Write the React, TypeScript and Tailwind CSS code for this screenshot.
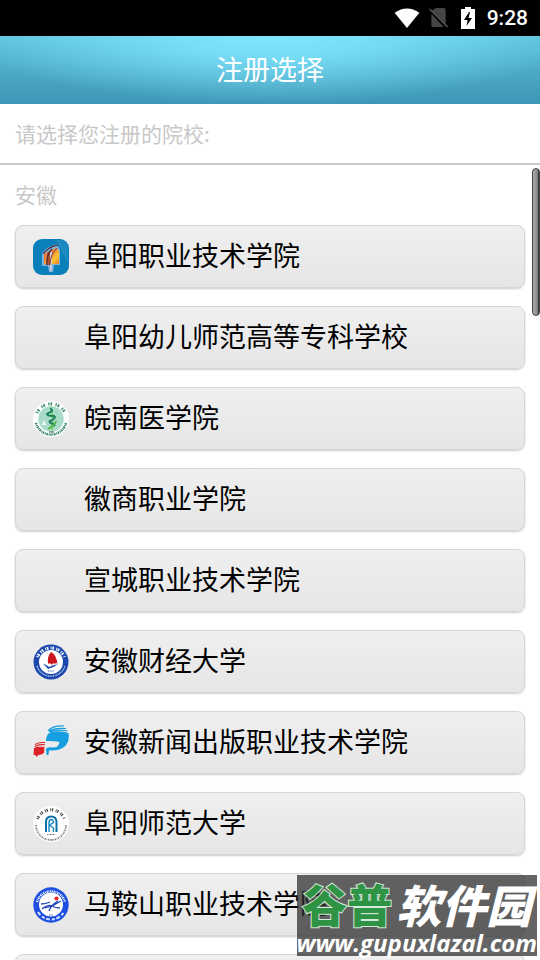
import React from 'react';

const FuyangVocationalLogo = () => (
  <svg viewBox="0 0 36 36" className="size-9" aria-hidden="true">
    <defs>
      <linearGradient id="door" x1="0" y1="0" x2="1" y2="1">
        <stop offset="0" stopColor="#e8643a" />
        <stop offset="0.45" stopColor="#f08a35" />
        <stop offset="0.7" stopColor="#fbc531" />
        <stop offset="1" stopColor="#e87a2c" />
      </linearGradient>
    </defs>
    <rect width="36" height="36" rx="9" fill="#0a80bb" />
    <path d="M24 1 L35 22 V9 Q35 2 28 1Z" fill="#1c89c0" />
    <path d="M24 1 L35 23" stroke="#3f9dca" strokeWidth="0.6" />
    <path d="M9 14 L14 9 L24 5 L27 11 V26 H21 L20 33 H16 L15 27 H9Z" fill="#a9bfe0" opacity="0.75" />
    <path d="M11 15 L23 9 L26 12 V25 H11Z" fill="url(#door)" />
    <path d="M14 14 L17 12 V26 H14Z" fill="#b5502f" />
    <path d="M17 14 L19 12 L18.500 32 H17Z" fill="#cfd3e3" />
    <path d="M10 15 Q15 8 25 6" fill="none" stroke="#4a2430" strokeWidth="1.200" />
    <path d="M14 26 Q13 16 19 10" fill="none" stroke="#4a2430" strokeWidth="1.200" />
    <path d="M17 26 Q17 15 24 9" fill="none" stroke="#7a3a3a" strokeWidth="1" />
  </svg>
);

const WannanMedicalLogo = () => (
  <svg viewBox="0 0 36 36" className="size-9" aria-hidden="true">
    <circle cx="18" cy="18" r="18" fill="#fdfefd" />
    <circle cx="18" cy="18" r="12.700" fill="#a9dbc9" />
    <path d="M4 12 A15.300 15.300 0 0 1 32 12" fill="none" stroke="#3c8d70" strokeWidth="3" strokeDasharray="1.200 1 1.800 3.400" />
    <path d="M3 22 A15.500 15.500 0 0 0 33 22" fill="none" stroke="#2f8063" strokeWidth="2.400" strokeDasharray="1.500 0.800 0.900 0.700" />
    <path d="M18 6 L19 11 L20 23 L19 29" fill="none" stroke="#6cbf4b" strokeWidth="1.200" />
    <path d="M17 8 Q19 8 19 10 L14 13 Q14 15 21 15 Q24 17 17 20 Q15 21 20 23 L22 25" fill="none" stroke="#17805a" strokeWidth="2" />
    <path d="M23 20 Q23 23 18 26 L15 28" fill="none" stroke="#55b548" strokeWidth="1.800" />
    <path d="M11 19 L13 24 H9Z" fill="#f4fbf8" />
    <path d="M16 31 H21" stroke="#37564c" strokeWidth="1" />
  </svg>
);

const AnhuiFinanceLogo = () => (
  <svg viewBox="0 0 36 36" className="size-9" aria-hidden="true">
    <circle cx="18" cy="18" r="17.500" fill="#1c48ae" />
    <circle cx="18" cy="18" r="12" fill="#fff" />
    <path d="M4.500 13 A14.600 14.600 0 0 1 31.500 13" fill="none" stroke="#fff" strokeWidth="3" strokeDasharray="1 0.800 1.600 2.200" />
    <path d="M4 22 A14.700 14.700 0 0 0 32 22" fill="none" stroke="#dce6fa" strokeWidth="1.200" strokeDasharray="1 0.700" />
    <path d="M15 20 Q14 12 18 8 Q23 10 24.500 20 Q23 18 22 20 Q20 18 19 21 Q17 18 15 20Z" fill="#d0161d" />
    <path d="M10 20 Q13 20 16 23 Q20 21 25 20 Q20 24 15 25 Q13 22 10 20Z" fill="#1c48ae" />
    <path d="M15 27 H21" stroke="#4468b8" strokeWidth="1" strokeDasharray="1 0.600" />
  </svg>
);

const AnhuiPressLogo = () => (
  <svg viewBox="0 0 36 36" className="size-9" aria-hidden="true">
    <path d="M13 16 Q13 9 18 7 Q27 5 35.500 8 Q37 17 31 22 Q26 26 16 25.500 L15.500 30 H13.500 L13 24 Q14 21.500 20 22.500 Q26 22.500 26.500 17 Q20 15.500 13 16Z" fill="#159fe0" />
    <path d="M15 6 Q19 0.500 31 1 M16 6.500 Q21 2.500 33 3.500 M17 7 Q23 4 34.500 6" fill="none" stroke="#159fe0" strokeWidth="1.200" />
    <path d="M1 23 Q5 21 11.500 22 L11 28 Q8 30 5.500 30 L3.500 32 L2.500 30 H0.500Z" fill="#dc2227" />
    <path d="M2 20 Q4 17 12 17.500 M2 21.800 Q5 19 12 19.800" fill="none" stroke="#dc2227" strokeWidth="1.100" />
  </svg>
);

const FuyangNormalLogo = () => (
  <svg viewBox="0 0 36 36" className="size-9" aria-hidden="true">
    <circle cx="18" cy="18" r="18" fill="#fff" />
    <path d="M4.500 13 A14.500 14.500 0 0 1 31.500 13" fill="none" stroke="#555" strokeWidth="3" strokeDasharray="1 0.700 1.400 2.400" />
    <path d="M3 19 A15 15 0 0 0 33 19" fill="none" stroke="#777" strokeWidth="1.800" strokeDasharray="1.200 0.700 0.700 0.800" />
    <path d="M13 26 V16 Q13 10.500 18 10.500 Q23.500 10.500 23.500 16 V26" fill="none" stroke="#0c6fa9" strokeWidth="2" />
    <path d="M16 26 V17 Q16 13.500 18 13.500 Q20.500 13.500 20.500 16.500 L16.500 19 L20.500 22 V26" fill="none" stroke="#1689c7" strokeWidth="1.400" />
    <path d="M14 28.500 H22" stroke="#777" strokeWidth="1" strokeDasharray="1 0.500" />
  </svg>
);

const MaanshanLogo = () => (
  <svg viewBox="0 0 36 36" className="size-9" aria-hidden="true">
    <circle cx="18" cy="18" r="17.700" fill="#1d4fe0" />
    <circle cx="18" cy="17.500" r="12" fill="#fff" />
    <path d="M4 15 A14.500 14.500 0 0 1 32 15" fill="none" stroke="#fff" strokeWidth="2.200" strokeDasharray="1.200 0.700 0.800 0.900" />
    <path d="M5 25 A15 15 0 0 0 31 25" fill="none" stroke="#d5e0ff" strokeWidth="2" strokeDasharray="4 2 3 1.500" />
    <circle cx="23.500" cy="11.500" r="2" fill="#e32320" />
    <path d="M8 17 Q13 17 17 15 M9 22 Q15 17 19 19 L28 14 M16 24 Q18 18 25 14 M12 21 L19 19 Q22 21 27 21" fill="none" stroke="#2146b8" strokeWidth="1.300" />
    <path d="M16 28 H20" stroke="#4468b8" strokeWidth="1.200" strokeDasharray="1 0.600" />
  </svg>
);

interface School {
  name: string;
  Logo?: React.FC;
}

const schools: School[] = [
  { name: '阜阳职业技术学院', Logo: FuyangVocationalLogo },
  { name: '阜阳幼儿师范高等专科学校' },
  { name: '皖南医学院', Logo: WannanMedicalLogo },
  { name: '徽商职业学院' },
  { name: '宣城职业技术学院' },
  { name: '安徽财经大学', Logo: AnhuiFinanceLogo },
  { name: '安徽新闻出版职业技术学院', Logo: AnhuiPressLogo },
  { name: '阜阳师范大学', Logo: FuyangNormalLogo },
  { name: '马鞍山职业技术学院', Logo: MaanshanLogo },
  { name: '' },
];

const StatusBar = () => (
  <div className="flex h-9 shrink-0 items-center justify-end bg-black pr-3 text-white">
    <svg viewBox="0 0 26 21" className="h-5 w-7" aria-hidden="true">
      <path d="M0 5 Q13 -4 26 5 L13 21Z" fill="#fff" />
    </svg>
    <svg viewBox="0 0 20 21" className="ml-2 h-5 w-5" aria-hidden="true">
      <path d="M7 0 H15 Q17 0 17 2 V17 L2 3Z M2 6 L15 20 H4 Q2 20 2 18Z" fill="#454545" />
      <path d="M0 1 L19 20" stroke="#555" strokeWidth="1.500" />
    </svg>
    <svg viewBox="0 0 14 22" className="ml-3 h-[22px] w-3.5" aria-hidden="true">
      <path d="M4 0 H10 V2 H14 V22 H0 V2 H4Z" fill="#fff" />
      <path d="M8 5 L3 13 H6.500 L5.500 19 L11 11 H7.500 L9 5Z" fill="#000" />
    </svg>
    <span className="ml-3 font-['Roboto',sans-serif] text-[21px] font-medium leading-6">9:28</span>
  </div>
);

const App: React.FC = () => {
  return (
    <div className="relative flex h-screen flex-col overflow-hidden bg-white font-['Noto_Sans_CJK_SC',sans-serif]">
      <StatusBar />
      <header className="flex h-[68px] shrink-0 items-center justify-center bg-[radial-gradient(ellipse_56%_100%_at_50%_0%,#7fe6ff_0%,#7fe6ffcc_30%,#7fe6ff00_100%),linear-gradient(#5fc3df,#459fbd_75%,#3e97b8)] pb-0.5">
        <h1 className="text-[27px] leading-9 text-white">注册选择</h1>
      </header>
      <p className="shrink-0 border-b-2 border-[#c8c8c8] px-[15px] pt-[13px] pb-[14px] text-[21px] leading-8 text-[#c8c8c8]">
        请选择您注册的院校:
      </p>
      <main className="relative min-h-0 flex-1 overflow-hidden px-[15px]">
        <h2 className="pt-[13px] pb-[15px] text-[21px] leading-8 text-[#c8c8c8]">安徽</h2>
        <ul className="flex flex-col gap-[18px]">
          {schools.map(({ name, Logo }) => (
            <li key={name}>
              <button
                type="button"
                className="flex h-[63px] w-full items-center gap-[15px] rounded-lg border border-[#d6d6d6] bg-linear-to-b from-[#efefef] to-[#e6e6e6] px-[17px] text-left shadow-[0_1px_2px_rgba(0,0,0,0.2)]"
              >
                <span className="size-9 shrink-0">{Logo && <Logo />}</span>
                <span className="pb-1 text-[27px] leading-9 whitespace-nowrap text-black">{name}</span>
              </button>
            </li>
          ))}
        </ul>
        <div className="absolute top-[3px] right-0 h-[148px] w-2 rounded-full border border-[#444] bg-linear-to-r from-[#a8a8a8] via-[#8c8c8c] via-70% to-[#222]" />
      </main>
      <div className="absolute right-[3px] bottom-1 flex h-[81px] flex-col items-center justify-between bg-[#2a2a2ab8] text-white">
        <div className="flex gap-1 pt-1 text-[45px] leading-[50px] font-black whitespace-nowrap">
          <span className="text-[#2f9345] [paint-order:stroke_fill] [-webkit-text-stroke:2px_#d5ead8]">谷普</span>
          <span className="italic">软件园</span>
        </div>
        <div className="font-['Open_Sans',sans-serif] text-[24px] leading-7 font-bold italic">www.gupuxlazal.com</div>
      </div>
    </div>
  );
};

export default App;
